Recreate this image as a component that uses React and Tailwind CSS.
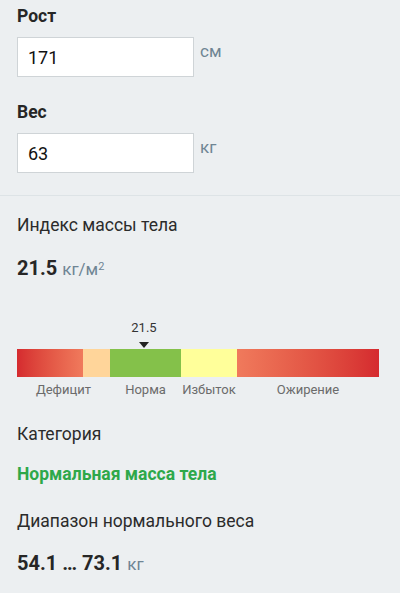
import React from "react";

const segments = [
  { w: 66, cls: "bg-gradient-to-r from-[#d52a2f] to-[#f07a5c]" },
  { w: 27, cls: "bg-[#ffd59a]" },
  { w: 71, cls: "bg-[#84c14a]" },
  { w: 56, cls: "bg-[#ffff9a]" },
  { w: 142, cls: "bg-gradient-to-r from-[#f07a5c] to-[#d52a2f]" },
];

const labels = [
  { w: 93, text: "Дефицит" },
  { w: 71, text: "Норма" },
  { w: 56, text: "Избыток" },
  { w: 142, text: "Ожирение" },
];

function Field({ label, value, unit }) {
  return (
    <div>
      <div className="text-[17.5px] font-bold text-[#262626] leading-5">{label}</div>
      <div className="flex items-start mt-[11px]">
        <input
          readOnly
          value={value}
          className="w-[177px] h-[40px] bg-white border border-[#cfd4d7] px-[10px] text-[18px] text-[#111] outline-none"
        />
        <span className="ml-[6px] mt-[4px] text-[17px] leading-5 text-[#6f8594]">{unit}</span>
      </div>
    </div>
  );
}

export default function App() {
  return (
    <div
      className="w-[400px] h-[593px] bg-[#eceff1] text-[#262626] overflow-hidden"
      style={{ fontFamily: "Roboto, 'Noto Sans', sans-serif" }}
    >
      <div className="px-[17px] pt-[6px] flex flex-col gap-[25px]">
        <Field label="Рост" value="171" unit="см" />
        <Field label="Вес" value="63" unit="кг" />
      </div>

      <div className="mt-[22px] border-t border-[#dde3e6]" />

      <div className="px-[17px]">
        <div className="mt-[18px] text-[17.5px] leading-[22px] text-[#2b2b2b]">Индекс массы тела</div>
        <div className="mt-[20px] flex items-baseline gap-[5px] leading-6">
          <span className="text-[20px] font-bold text-[#262626]">21.5</span>
          <span className="text-[17px] text-[#6f8594]">
            кг/м<sup className="text-[11px]">2</sup>
          </span>
        </div>

        <div className="mt-[38px] w-[362px]">
          <div className="relative h-[30px]">
            <div className="absolute left-[107px] top-[1px] w-[40px] text-center text-[13px] text-[#333] leading-4">21.5</div>
            <div className="absolute left-[122px] top-[23px] w-0 h-0 border-l-[5px] border-r-[5px] border-t-[6px] border-l-transparent border-r-transparent border-t-[#222]" />
          </div>
          <div className="flex h-[28px]">
            {segments.map((s, i) => (
              <div key={i} className={s.cls} style={{ width: s.w }} />
            ))}
          </div>
          <div className="flex mt-[5px]">
            {labels.map((l, i) => (
              <div key={i} className="text-center text-[13px] text-[#6b6b6b] leading-4" style={{ width: l.w }}>
                {l.text}
              </div>
            ))}
          </div>
        </div>

        <div className="mt-[25px] text-[17.5px] leading-[22px] text-[#2b2b2b]">Категория</div>
        <div className="mt-[18px] text-[17.5px] leading-[22px] font-bold text-[#2ea84a]">Нормальная масса тела</div>
        <div className="mt-[25px] text-[17.5px] leading-[22px] text-[#2b2b2b]">Диапазон нормального веса</div>
        <div className="mt-[19px] flex items-baseline gap-[5px] leading-6">
          <span className="text-[20px] font-bold text-[#262626]">54.1 … 73.1</span>
          <span className="text-[17px] text-[#6f8594]">кг</span>
        </div>
      </div>
    </div>
  );
}
